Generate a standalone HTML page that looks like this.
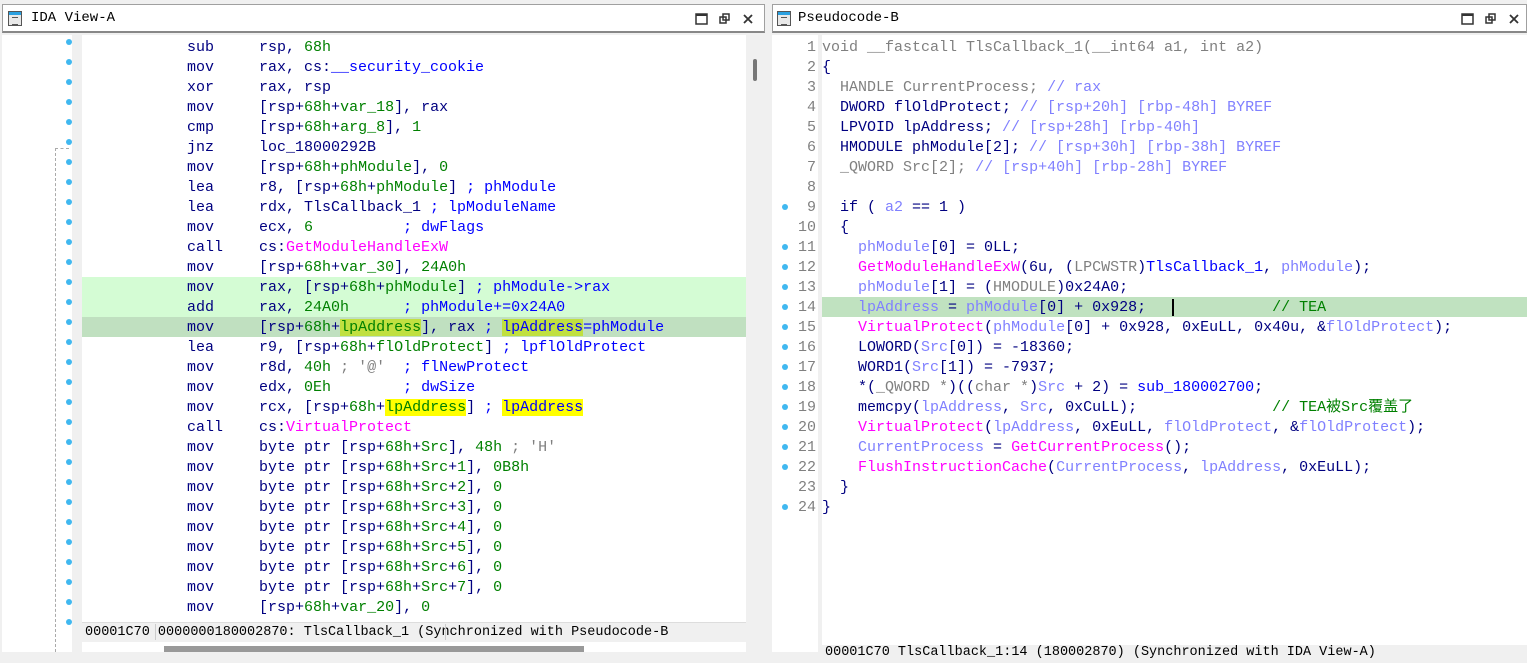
<!DOCTYPE html>
<html><head><meta charset="utf-8"><style>
*{margin:0;padding:0;box-sizing:border-box}
body{width:1527px;height:652px;overflow:hidden;background:#f0f0f0;position:relative;font-family:"Liberation Mono","Noto Sans CJK SC",monospace}
.abs{position:absolute}
pre{font-family:"Liberation Mono","Noto Sans CJK SC",monospace;font-size:15px;line-height:20px;color:#000080;white-space:pre}
.n{color:#000080}.g{color:#008000}.b{color:#0000ff}.m{color:#ff00ff}.gr{color:#808080}.p{color:#8080ff}.hy{background:#ffff00}.hg{background:#c0e040}
.title{background:#fff;border:1px solid #a0a0a0;border-bottom:2px solid #888;height:29px;font-size:14px;color:#000;line-height:27px}
.ico{position:absolute;top:6px;width:14px;height:15px;border:1px solid #555;background:#e8e8e8}
.ico:before{content:"";position:absolute;left:0;top:0;right:0;height:3px;background:#2aa0e0}
.ico:after{content:"";position:absolute;left:3px;top:5px;width:6px;height:6px;border-top:1px solid #555;border-bottom:1px solid #555}
.dot{position:absolute;width:6px;height:6px;border-radius:50%;background:#40b8f0}
</style></head><body>
<!-- left panel -->
<div class="abs title" style="left:2px;top:4px;width:763px;">
  <div class="ico" style="left:5px"></div>
  <span class="abs" style="left:28px;top:0">IDA View-A</span>
  <svg class="abs" style="left:692px;top:8px" width="64" height="14">
    <rect x="1" y="1" width="11" height="10" fill="none" stroke="#333" stroke-width="1.5"/><rect x="1" y="1" width="11" height="2" fill="#333"/>
    <rect x="25" y="4" width="6" height="6" fill="none" stroke="#333" stroke-width="1.5"/><rect x="28" y="1" width="6" height="6" fill="none" stroke="#333" stroke-width="1.5"/>
    <path d="M49 2 L57 10 M57 2 L49 10" stroke="#333" stroke-width="1.8"/>
  </svg>
</div>
<div class="abs" style="left:2px;top:35px;width:70px;height:617px;background:#fff"></div>
<div class="abs" style="left:55px;top:148px;height:504px;border-left:1px dashed #aaa"></div>
<div class="abs" style="left:55px;top:148px;width:14px;border-top:1px dashed #aaa"></div>
<div class="abs" style="left:82px;top:35px;width:664px;height:587px;background:#fff"></div>
<div class="abs" style="left:82px;top:277px;width:664px;height:40px;background:#d4fcd4"></div>
<div class="abs" style="left:82px;top:317px;width:664px;height:20px;background:#c0e0c0"></div>
<div class="abs" style="left:746px;top:35px;width:19px;height:610px;background:#f0f0f0"></div>
<div class="abs" style="left:753px;top:59px;width:4px;height:22px;background:#777;border-radius:2px"></div>
<div class="abs" style="left:82px;top:622px;width:664px;height:20px;background:#f0f0f0;border-top:1px solid #ddd"></div>
<pre class="abs" style="left:85px;top:623px;color:#000;font-size:13.5px;line-height:20px">00001C70 0000000180002870: TlsCallback_1 (Synchronized with Pseudocode-B</pre>
<div class="abs" style="left:155px;top:624px;height:16px;border-left:1px solid #ccc"></div>
<div class="abs" style="left:445px;top:624px;height:16px;border-left:1px solid #ccc"></div>
<div class="abs" style="left:82px;top:642px;width:664px;height:10px;background:#fff"></div>
<div class="abs" style="left:164px;top:646px;width:420px;height:6px;background:#999"></div>
<pre class="abs" style="left:187px;top:38px">sub     rsp, <span class="g">68h</span>
mov     rax, cs:<span class="b">__security_cookie</span>
xor     rax, rsp
mov     [rsp+<span class="g">68h</span>+<span class="g">var_18</span>], rax
cmp     [rsp+<span class="g">68h</span>+<span class="g">arg_8</span>], <span class="g">1</span>
jnz     loc_18000292B
mov     [rsp+<span class="g">68h</span>+<span class="g">phModule</span>], <span class="g">0</span>
lea     r8, [rsp+<span class="g">68h</span>+<span class="g">phModule</span>] <span class="b">; phModule</span>
lea     rdx, TlsCallback_1 <span class="b">; lpModuleName</span>
mov     ecx, <span class="g">6</span>          <span class="b">; dwFlags</span>
call    cs:<span class="m">GetModuleHandleExW</span>
mov     [rsp+<span class="g">68h</span>+<span class="g">var_30</span>], <span class="g">24A0h</span>
mov     rax, [rsp+<span class="g">68h</span>+<span class="g">phModule</span>] <span class="b">; phModule-&gt;rax</span>
add     rax, <span class="g">24A0h</span>      <span class="b">; phModule+=0x24A0</span>
mov     [rsp+<span class="g">68h</span>+<span class="g hg">lpAddress</span>], rax <span class="b">; <span class="hg">lpAddress</span>=phModule</span>
lea     r9, [rsp+<span class="g">68h</span>+<span class="g">flOldProtect</span>] <span class="b">; lpflOldProtect</span>
mov     r8d, <span class="g">40h</span> <span class="gr">; '@'</span>  <span class="b">; flNewProtect</span>
mov     edx, <span class="g">0Eh</span>        <span class="b">; dwSize</span>
mov     rcx, [rsp+<span class="g">68h</span>+<span class="g hy">lpAddress</span>] <span class="b">; <span class="hy">lpAddress</span></span>
call    cs:<span class="m">VirtualProtect</span>
mov     byte ptr [rsp+<span class="g">68h</span>+<span class="g">Src</span>], <span class="g">48h</span> <span class="gr">; 'H'</span>
mov     byte ptr [rsp+<span class="g">68h</span>+<span class="g">Src</span>+<span class="g">1</span>], <span class="g">0B8h</span>
mov     byte ptr [rsp+<span class="g">68h</span>+<span class="g">Src</span>+<span class="g">2</span>], <span class="g">0</span>
mov     byte ptr [rsp+<span class="g">68h</span>+<span class="g">Src</span>+<span class="g">3</span>], <span class="g">0</span>
mov     byte ptr [rsp+<span class="g">68h</span>+<span class="g">Src</span>+<span class="g">4</span>], <span class="g">0</span>
mov     byte ptr [rsp+<span class="g">68h</span>+<span class="g">Src</span>+<span class="g">5</span>], <span class="g">0</span>
mov     byte ptr [rsp+<span class="g">68h</span>+<span class="g">Src</span>+<span class="g">6</span>], <span class="g">0</span>
mov     byte ptr [rsp+<span class="g">68h</span>+<span class="g">Src</span>+<span class="g">7</span>], <span class="g">0</span>
mov     [rsp+<span class="g">68h</span>+<span class="g">var_20</span>], <span class="g">0</span></pre>
<!-- left dots -->
<div class="dot" style="left:66px;top:39px"></div><div class="dot" style="left:66px;top:59px"></div><div class="dot" style="left:66px;top:79px"></div><div class="dot" style="left:66px;top:99px"></div><div class="dot" style="left:66px;top:119px"></div><div class="dot" style="left:66px;top:139px"></div><div class="dot" style="left:66px;top:159px"></div><div class="dot" style="left:66px;top:179px"></div><div class="dot" style="left:66px;top:199px"></div><div class="dot" style="left:66px;top:219px"></div><div class="dot" style="left:66px;top:239px"></div><div class="dot" style="left:66px;top:259px"></div><div class="dot" style="left:66px;top:279px"></div><div class="dot" style="left:66px;top:299px"></div><div class="dot" style="left:66px;top:319px"></div><div class="dot" style="left:66px;top:339px"></div><div class="dot" style="left:66px;top:359px"></div><div class="dot" style="left:66px;top:379px"></div><div class="dot" style="left:66px;top:399px"></div><div class="dot" style="left:66px;top:419px"></div><div class="dot" style="left:66px;top:439px"></div><div class="dot" style="left:66px;top:459px"></div><div class="dot" style="left:66px;top:479px"></div><div class="dot" style="left:66px;top:499px"></div><div class="dot" style="left:66px;top:519px"></div><div class="dot" style="left:66px;top:539px"></div><div class="dot" style="left:66px;top:559px"></div><div class="dot" style="left:66px;top:579px"></div><div class="dot" style="left:66px;top:599px"></div><div class="dot" style="left:66px;top:619px"></div>

<!-- right panel -->
<div class="abs title" style="left:772px;top:4px;width:755px;">
  <div class="ico" style="left:4px"></div>
  <span class="abs" style="left:25px;top:0">Pseudocode-B</span>
  <svg class="abs" style="left:688px;top:8px" width="64" height="14">
    <rect x="1" y="1" width="11" height="10" fill="none" stroke="#333" stroke-width="1.5"/><rect x="1" y="1" width="11" height="2" fill="#333"/>
    <rect x="25" y="4" width="6" height="6" fill="none" stroke="#333" stroke-width="1.5"/><rect x="28" y="1" width="6" height="6" fill="none" stroke="#333" stroke-width="1.5"/>
    <path d="M49 2 L57 10 M57 2 L49 10" stroke="#333" stroke-width="1.8"/>
  </svg>
</div>
<div class="abs" style="left:772px;top:35px;width:46px;height:617px;background:#fff"></div>
<div class="abs" style="left:822px;top:35px;width:705px;height:610px;background:#fff"></div>
<div class="abs" style="left:822px;top:297px;width:705px;height:20px;background:#c0e2c0"></div>
<div class="abs" style="left:1172px;top:299px;width:2px;height:17px;background:#000"></div>
<div class="abs" style="left:822px;top:645px;width:705px;height:7px;background:#f0f0f0"></div>
<pre class="abs" style="left:825px;top:643px;color:#000;font-size:13.5px">00001C70 TlsCallback_1:14 (180002870) (Synchronized with IDA View-A)</pre>
<pre class="abs gr" style="left:780px;top:38px;width:36px;text-align:right"> 1
 2
 3
 4
 5
 6
 7
 8
 9
10
11
12
13
14
15
16
17
18
19
20
21
22
23
24</pre>
<pre class="abs" style="left:822px;top:38px"><span class="gr">void __fastcall TlsCallback_1(__int64 a1, int a2)</span>
{
  <span class="gr">HANDLE CurrentProcess;</span> <span class="p">// rax</span>
  DWORD flOldProtect; <span class="p">// [rsp+20h] [rbp-48h] BYREF</span>
  LPVOID lpAddress; <span class="p">// [rsp+28h] [rbp-40h]</span>
  HMODULE phModule[2]; <span class="p">// [rsp+30h] [rbp-38h] BYREF</span>
  <span class="gr">_QWORD Src[2];</span> <span class="p">// [rsp+40h] [rbp-28h] BYREF</span>

  if ( <span class="p">a2</span> == 1 )
  {
    <span class="p">phModule</span>[0] = 0LL;
    <span class="m">GetModuleHandleExW</span>(6u, (<span class="gr">LPCWSTR</span>)<span class="b">TlsCallback_1</span>, <span class="p">phModule</span>);
    <span class="p">phModule</span>[1] = (<span class="gr">HMODULE</span>)0x24A0;
    <span class="p">lpAddress</span> = <span class="p">phModule</span>[0] + 0x928;              <span class="g">// TEA</span>
    <span class="m">VirtualProtect</span>(<span class="p">phModule</span>[0] + 0x928, 0xEuLL, 0x40u, &amp;<span class="p">flOldProtect</span>);
    LOWORD(<span class="p">Src</span>[0]) = -18360;
    WORD1(<span class="p">Src</span>[1]) = -7937;
    *(<span class="gr">_QWORD *</span>)((<span class="gr">char *</span>)<span class="p">Src</span> + 2) = <span class="b">sub_180002700</span>;
    memcpy(<span class="p">lpAddress</span>, <span class="p">Src</span>, 0xCuLL);               <span class="g">// TEA被Src覆盖了</span>
    <span class="m">VirtualProtect</span>(<span class="p">lpAddress</span>, 0xEuLL, <span class="p">flOldProtect</span>, &amp;<span class="p">flOldProtect</span>);
    <span class="p">CurrentProcess</span> = <span class="m">GetCurrentProcess</span>();
    <span class="m">FlushInstructionCache</span>(<span class="p">CurrentProcess</span>, <span class="p">lpAddress</span>, 0xEuLL);
  }
}</pre>
<div class="dot" style="left:782px;top:204px"></div>
<div class="dot" style="left:782px;top:244px"></div><div class="dot" style="left:782px;top:264px"></div><div class="dot" style="left:782px;top:284px"></div><div class="dot" style="left:782px;top:304px"></div><div class="dot" style="left:782px;top:324px"></div><div class="dot" style="left:782px;top:344px"></div><div class="dot" style="left:782px;top:364px"></div><div class="dot" style="left:782px;top:384px"></div><div class="dot" style="left:782px;top:404px"></div><div class="dot" style="left:782px;top:424px"></div><div class="dot" style="left:782px;top:444px"></div><div class="dot" style="left:782px;top:464px"></div>
<div class="dot" style="left:782px;top:504px"></div>
</body></html>
